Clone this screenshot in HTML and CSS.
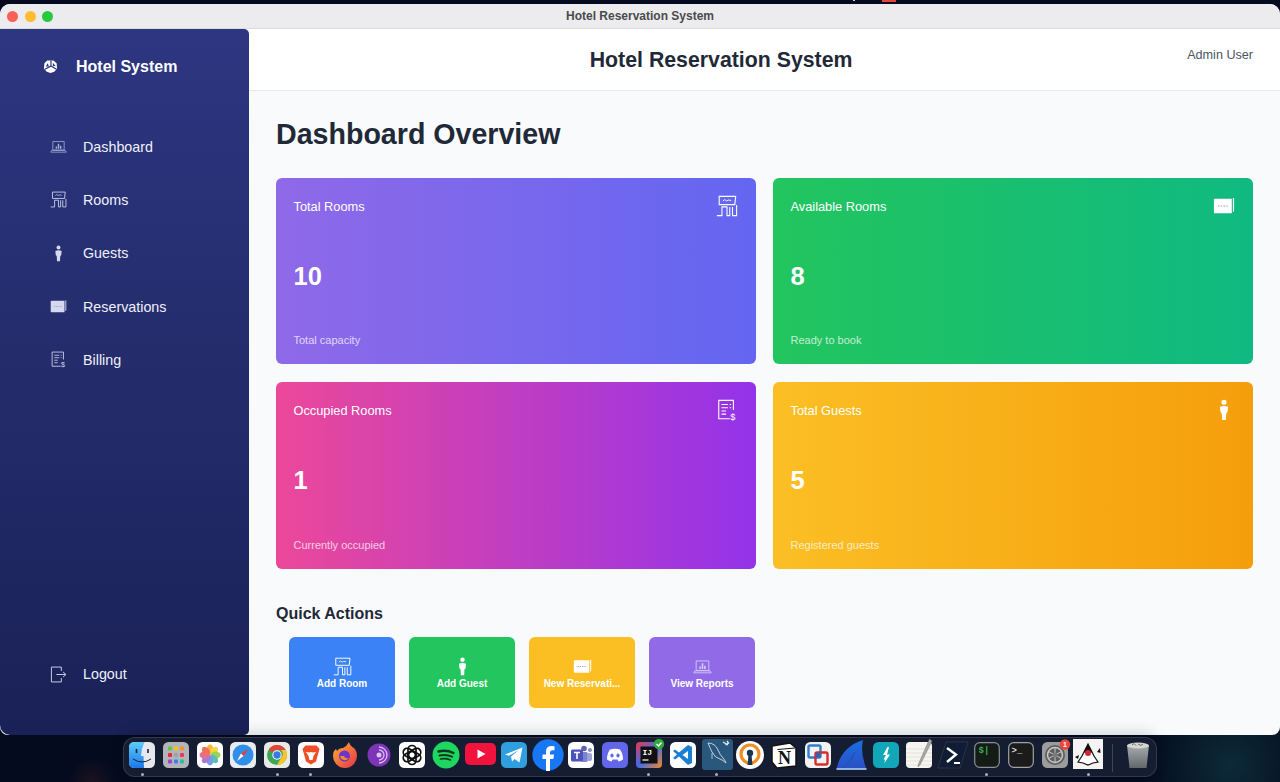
FILE: index.html
```html
<!DOCTYPE html>
<html lang="en">
<head>
    <meta charset="UTF-8">
    <meta name="viewport" content="width=device-width, initial-scale=1.0">
    <title>Hotel Reservation System</title>
    <link rel="stylesheet" href="styles.css">
</head>
<body>
    <svg class="defs" aria-hidden="true">
        <symbol id="i-report" viewBox="0 0 24 24">
            <path d="M4 5h16v12H4z M1 20h22l-1.500-2.500h-19z" fill="none" stroke="currentColor" stroke-width="1.100"/>
            <path d="M8 15v-3h2v3z M11 15V8h2v7z M14 15v-4h2v4z" fill="currentColor"/>
        </symbol>
        <symbol id="i-room" viewBox="0 0 24 24">
            <path d="M3.500 1.500h18l-1 9h-17z" fill="none" stroke="currentColor" stroke-width="1.200"/>
            <path d="M7.500 6.500l2-1.500 2 1.500 2-1 3 .5" fill="none" stroke="currentColor" stroke-width="1"/>
            <path d="M1 22.500h5.500V13h5.500v9.500h3V13 M22.500 11v11.500H18V13" fill="none" stroke="currentColor" stroke-width="1.200"/>
        </symbol>
        <symbol id="i-guest" viewBox="0 0 24 24">
            <circle cx="12" cy="3.500" r="2.800" fill="currentColor"/>
            <path d="M7.500 8.500q4.500-2 9 0l-.7 6-1.300 1-.4 7.500h-4.200l-.4-7.500-1.300-1z" fill="currentColor"/>
        </symbol>
        <symbol id="i-card" viewBox="0 0 24 24">
            <path d="M1 5q0-1 1-1h18.500v16H2q-1 0-1-1z" fill="currentColor"/>
            <path d="M21.700 3v15.500q1.500-.3 1.300-1.500V3.500z" fill="currentColor"/>
            <path d="M5.500 12h1.700M8.500 12h1.700M11.500 12h1.700M14.500 12h1.700" stroke="#8f93a8" stroke-width="1"/>
        </symbol>
        <symbol id="i-bill" viewBox="0 0 24 24">
            <path d="M19 12V1.500H3v20h12" fill="none" stroke="currentColor" stroke-width="1.200"/>
            <path d="M6 6h7M6 9.500h7M6 13h5M15 6h1.500M15 9.500h1.500M6 16.500h5" stroke="currentColor" stroke-width="1.100"/>
            <text x="15.500" y="23" class="dollar">$</text>
        </symbol>
        <symbol id="i-logout" viewBox="0 0 24 24">
            <path d="M16 7V1.500H2v21h14V17" fill="none" stroke="currentColor" stroke-width="1.300"/>
            <path d="M9 12h13M18.500 8.500L22.500 12l-4 3.500" fill="none" stroke="currentColor" stroke-width="1.300"/>
        </symbol>
    </svg>

    <div class="window">
        <div class="titlebar">
            <div class="lights">
                <span class="light red"></span>
                <span class="light yellow"></span>
                <span class="light green"></span>
            </div>
            <div class="titlebar-text">Hotel Reservation System</div>
        </div>

        <div class="app">
            <aside class="sidebar">
                <div class="brand">
                    <svg class="brand-icon" viewBox="0 0 16 16">
                        <path d="M4.500 1.500L11 1.500 14.500 4.500 15 10 12 13.500 8 15 4 13.500 1 10 1.500 4.500z" fill="#fff"/>
                        <path d="M8.500 1.500v6L2 11M8.500 7.500L14.500 11" fill="none" stroke="#2c357f" stroke-width="1.300"/>
                        <path d="M5 4.500l-2 3.500h3.500zM10.500 4v3.500h3z" fill="#2c357f"/>
                    </svg>
                    <span>Hotel System</span>
                </div>
                <nav class="nav">
                    <a class="nav-item"><svg class="nav-icon dim"><use href="#i-report"/></svg>Dashboard</a>
                    <a class="nav-item"><svg class="nav-icon"><use href="#i-room"/></svg>Rooms</a>
                    <a class="nav-item"><svg class="nav-icon"><use href="#i-guest"/></svg>Guests</a>
                    <a class="nav-item"><svg class="nav-icon"><use href="#i-card"/></svg>Reservations</a>
                    <a class="nav-item"><svg class="nav-icon"><use href="#i-bill"/></svg>Billing</a>
                </nav>
                <a class="nav-item logout"><svg class="nav-icon"><use href="#i-logout"/></svg>Logout</a>
            </aside>

            <main class="main">
                <header class="topbar">
                    <div class="topbar-title">Hotel Reservation System</div>
                    <div class="topbar-user">Admin User</div>
                </header>

                <section class="content">
                    <h1>Dashboard Overview</h1>

                    <div class="cards">
                        <div class="card purple">
                            <div class="card-top"><span>Total Rooms</span><svg class="card-icon"><use href="#i-room"/></svg></div>
                            <div class="card-value">10</div>
                            <div class="card-sub">Total capacity</div>
                        </div>
                        <div class="card emerald">
                            <div class="card-top"><span>Available Rooms</span><svg class="card-icon"><use href="#i-card"/></svg></div>
                            <div class="card-value">8</div>
                            <div class="card-sub">Ready to book</div>
                        </div>
                        <div class="card pink">
                            <div class="card-top"><span>Occupied Rooms</span><svg class="card-icon"><use href="#i-bill"/></svg></div>
                            <div class="card-value">1</div>
                            <div class="card-sub">Currently occupied</div>
                        </div>
                        <div class="card amber">
                            <div class="card-top"><span>Total Guests</span><svg class="card-icon"><use href="#i-guest"/></svg></div>
                            <div class="card-value">5</div>
                            <div class="card-sub">Registered guests</div>
                        </div>
                    </div>

                    <h2>Quick Actions</h2>
                    <div class="actions">
                        <a class="action blue"><svg class="action-icon"><use href="#i-room"/></svg>Add Room</a>
                        <a class="action green"><svg class="action-icon"><use href="#i-guest"/></svg>Add Guest</a>
                        <a class="action yellow"><svg class="action-icon"><use href="#i-card"/></svg>New Reservati...</a>
                        <a class="action violet"><svg class="action-icon dim"><use href="#i-report"/></svg>View Reports</a>
                    </div>
                </section>
            </main>
        </div>
    </div>

    <div class="dock">
        <!-- finder -->
        <div class="dock-item on"><svg viewBox="0 0 26 26">
            <defs><linearGradient id="fnd" x1="0" y1="0" x2="0" y2="1"><stop offset="0" stop-color="#5ecbf8"/><stop offset="1" stop-color="#1a78ea"/></linearGradient></defs>
            <rect width="26" height="26" rx="5.500" fill="#e6e8ee"/>
            <path d="M5.500 0h10q-3 6-3.500 14h2.500l.5 12H5.500Q0 26 0 20.500v-15Q0 0 5.500 0z" fill="url(#fnd)"/>
            <path d="M7.500 7v4M19 7v4" stroke="#123" stroke-width="1.600"/>
            <path d="M4 17q9 6 18 0" fill="none" stroke="#123" stroke-width="1"/>
        </svg></div>
        <!-- launchpad -->
        <div class="dock-item"><svg viewBox="0 0 26 26">
            <rect width="26" height="26" rx="5.500" fill="#b3b3b8"/>
            <g>
                <rect x="5" y="4.500" width="4" height="4" rx="1" fill="#58c84a"/><rect x="11" y="4.500" width="4" height="4" rx="1" fill="#f5c221"/><rect x="17" y="4.500" width="4" height="4" rx="1" fill="#f5932a"/>
                <rect x="5" y="11" width="4" height="4" rx="1" fill="#e8283a"/><rect x="11" y="11" width="4" height="4" rx="1" fill="#9fa3a8"/><rect x="17" y="11" width="4" height="4" rx="1" fill="#ea3a5c"/>
                <rect x="5" y="17.500" width="4" height="4" rx="1" fill="#a040d8"/><rect x="11" y="17.500" width="4" height="4" rx="1" fill="#2f83f0"/><rect x="17" y="17.500" width="4" height="4" rx="1" fill="#22c29a"/>
            </g>
        </svg></div>
        <!-- photos -->
        <div class="dock-item"><svg viewBox="0 0 26 26">
            <rect width="26" height="26" rx="5.500" fill="#fff"/>
            <g opacity=".85">
                <ellipse cx="13" cy="7.500" rx="3.400" ry="5" fill="#f7a823"/>
                <ellipse cx="13" cy="7.500" rx="3.400" ry="5" fill="#f4d21f" transform="rotate(45 13 13)"/>
                <ellipse cx="13" cy="7.500" rx="3.400" ry="5" fill="#8fcb3a" transform="rotate(90 13 13)"/>
                <ellipse cx="13" cy="7.500" rx="3.400" ry="5" fill="#3fb6a0" transform="rotate(135 13 13)"/>
                <ellipse cx="13" cy="7.500" rx="3.400" ry="5" fill="#5a8fe0" transform="rotate(180 13 13)"/>
                <ellipse cx="13" cy="7.500" rx="3.400" ry="5" fill="#9a62c8" transform="rotate(225 13 13)"/>
                <ellipse cx="13" cy="7.500" rx="3.400" ry="5" fill="#e0558a" transform="rotate(270 13 13)"/>
                <ellipse cx="13" cy="7.500" rx="3.400" ry="5" fill="#ee5a3a" transform="rotate(315 13 13)"/>
            </g>
        </svg></div>
        <!-- safari -->
        <div class="dock-item"><svg viewBox="0 0 26 26">
            <rect width="26" height="26" rx="5.500" fill="#e9ecef"/>
            <circle cx="13" cy="13" r="10.500" fill="#2f8fe8"/>
            <path d="M19 7l-8 4.500 2.500 2.500z" fill="#ee3b30"/>
            <path d="M7 19l4-7.500 2.500 2.500z" fill="#fff"/>
        </svg></div>
        <!-- chrome -->
        <div class="dock-item on"><svg viewBox="0 0 26 26">
            <rect width="26" height="26" rx="5.500" fill="#e9e9e6"/>
            <circle cx="13" cy="13" r="10" fill="#3aa757"/>
            <path d="M13 3a10 10 0 0 1 8.700 5H13a5 5 0 0 0-4.600 3L4.800 7.300A10 10 0 0 1 13 3z" fill="#e0463a"/>
            <path d="M21.700 8A10 10 0 0 1 13 23l4.300-7.500A5 5 0 0 0 17 8z" fill="#f7c430"/>
            <circle cx="13" cy="13" r="4.700" fill="#fff"/>
            <circle cx="13" cy="13" r="3.700" fill="#3b78e7"/>
        </svg></div>
        <!-- brave -->
        <div class="dock-item on"><svg viewBox="0 0 26 26">
            <rect width="26" height="26" rx="5.500" fill="#fff"/>
            <path d="M7.500 3.500h11l3 3.500-1 3.500-2.500 9-5 3-5-3-2.500-9-1-3.500z" fill="#ee4f28"/>
            <path d="M8 10l3.500.5L13 10l1.500.5L18 10l-2.500 4-1 4H11.500l-1-4z" fill="#fff"/>
        </svg></div>
        <!-- firefox -->
        <div class="dock-item"><svg viewBox="0 0 26 26">
            <defs><linearGradient id="ffx" x1="0" y1="0" x2="1" y2="1"><stop offset="0" stop-color="#ffb22e"/><stop offset="1" stop-color="#e8304c"/></linearGradient></defs>
            <path d="M17 0q1 4 5 6 3 3 3 8a12 12 0 1 1-24 0q0-5 3-7l1 2q2-3 6-3 4-2 6-6z" fill="url(#ffx)"/>
            <circle cx="12.500" cy="14" r="5.500" fill="#6a37c8"/>
            <path d="M8 14a5 5 0 0 0 9 2q-4 1-5-2z" fill="#f6872e"/>
        </svg></div>
        <!-- tor -->
        <div class="dock-item"><svg viewBox="0 0 26 26">
            <circle cx="13" cy="13" r="11.500" fill="#7d34b8"/>
            <path d="M13 5a8 8 0 0 1 0 16M13 8a5 5 0 0 1 0 10" fill="none" stroke="#dcc3f0" stroke-width="1.300"/>
            <circle cx="13" cy="13" r="2.500" fill="#dcc3f0"/>
        </svg></div>
        <!-- chatgpt -->
        <div class="dock-item"><svg viewBox="0 0 26 26">
            <rect width="26" height="26" rx="5.500" fill="#fff"/>
            <g fill="none" stroke="#111" stroke-width="1.700">
                <rect x="9" y="3.500" width="8" height="13" rx="4"/>
                <rect x="9" y="3.500" width="8" height="13" rx="4" transform="rotate(60 13 13)"/>
                <rect x="9" y="3.500" width="8" height="13" rx="4" transform="rotate(120 13 13)"/>
                <rect x="9" y="3.500" width="8" height="13" rx="4" transform="rotate(180 13 13)"/>
                <rect x="9" y="3.500" width="8" height="13" rx="4" transform="rotate(240 13 13)"/>
                <rect x="9" y="3.500" width="8" height="13" rx="4" transform="rotate(300 13 13)"/>
            </g>
        </svg></div>
        <!-- spotify -->
        <div class="dock-item"><svg viewBox="0 0 26 26">
            <circle cx="13" cy="13" r="13.500" fill="#1ed760"/>
            <g fill="none" stroke="#11361f" stroke-linecap="round">
                <path d="M5.500 9.500q8-2 15 1.500" stroke-width="2.400"/>
                <path d="M6.500 13.500q7-1.500 12.500 1.200" stroke-width="2"/>
                <path d="M7.500 17q5.500-1 10 1" stroke-width="1.600"/>
            </g>
        </svg></div>
        <!-- youtube -->
        <div class="dock-item"><svg viewBox="0 0 26 26">
            <rect x="-2" y="1" width="31" height="22" rx="5" fill="#f2133c"/>
            <path d="M10.500 7.500l8 4.500-8 4.500z" fill="#fff"/>
        </svg></div>
        <!-- telegram -->
        <div class="dock-item"><svg viewBox="0 0 26 26">
            <rect width="26" height="26" rx="5.500" fill="#2f9fe0"/>
            <path d="M4 12.500l17.500-7-3 15-5-3.500-2.500 2.500-1-5 8-6.500-10 5.800z" fill="#fff"/>
        </svg></div>
        <!-- facebook -->
        <div class="dock-item"><svg viewBox="0 0 26 26">
            <circle cx="13" cy="13" r="15.700" fill="#1877f2"/>
            <path d="M11 29V17H7.500v-4.500H11V9.500Q11 4 16.500 4q2 0 3 .3v4h-2q-2.500 0-2.500 2.200v2H19l-.6 4.500H15v12z" fill="#fff"/>
        </svg></div>
        <!-- teams -->
        <div class="dock-item"><svg viewBox="0 0 26 26">
            <rect width="26" height="26" rx="5.500" fill="#fff"/>
            <circle cx="16" cy="6.500" r="2.800" fill="#6264a7"/>
            <circle cx="22" cy="8" r="2" fill="#8b8cc7"/>
            <rect x="13" y="10" width="7" height="10" rx="2" fill="#7b83c9"/>
            <rect x="19" y="11" width="5" height="8" rx="2" fill="#9ea2dc"/>
            <rect x="3" y="7.500" width="12" height="12" rx="1.500" fill="#4b53bc"/>
            <path d="M6 10.500h6M9 10.500v6.500" stroke="#fff" stroke-width="1.600"/>
        </svg></div>
        <!-- discord -->
        <div class="dock-item"><svg viewBox="0 0 26 26">
            <rect width="26" height="26" rx="5.500" fill="#6166ea"/>
            <path d="M8 7.500q5-1.500 10 0 3 4 3 10-2 1.500-4.500 2l-1-2h-5l-1 2Q7 19 5 17.500q0-6 3-10z" fill="#fff"/>
            <ellipse cx="10" cy="13.500" rx="1.600" ry="2" fill="#6166ea"/>
            <ellipse cx="16" cy="13.500" rx="1.600" ry="2" fill="#6166ea"/>
        </svg></div>
        <!-- intellij -->
        <div class="dock-item on"><svg viewBox="0 0 26 26">
            <defs><linearGradient id="ij" x1="0" y1="0" x2="1" y2="1"><stop offset="0" stop-color="#f0383f"/><stop offset=".5" stop-color="#3f6bf0"/><stop offset="1" stop-color="#f78a20"/></linearGradient></defs>
            <rect width="26" height="26" rx="4" fill="url(#ij)"/>
            <rect x="4.500" y="4.500" width="17" height="17" fill="#111"/>
            <text x="6.500" y="13" class="dock-mono ij">IJ</text>
            <path d="M6.500 18h6" stroke="#fff" stroke-width="1.200"/>
            <circle cx="23" cy="2" r="5.200" fill="#2fa83c"/>
            <path d="M20.500 2l2 2 3-3.500" fill="none" stroke="#fff" stroke-width="1.400"/>
        </svg></div>
        <!-- vscode -->
        <div class="dock-item"><svg viewBox="0 0 26 26">
            <rect width="26" height="26" rx="5.500" fill="#fff"/>
            <path d="M18 3l4 2v16l-4 2-9-8.500-4 3-2-1.500 4-3.500-4-3.500 2-1.500 4 3zM18 9l-5.500 4 5.500 4z" fill="#1a7fd0"/>
        </svg></div>
        <!-- mysql workbench -->
        <div class="dock-item on"><svg viewBox="0 0 26 26">
            <rect x="-2" y="-3" width="31" height="31" rx="3" fill="#2a587c"/>
            <path d="M4 1q7 0 10 7 2 5 5 8 2 2 3 5-3-3-6-4-5-1-8-7Q6 6 4 1z" fill="none" stroke="#cfe0ea" stroke-width=".9"/>
            <path d="M8 11v6" stroke="#cfe0ea" stroke-width=".8"/>
            <path d="M19 0l5 3M23 -1l1.500 2-3 2" fill="none" stroke="#e4edf2" stroke-width="1.300"/>
        </svg></div>
        <!-- openvpn -->
        <div class="dock-item"><svg viewBox="0 0 26 26">
            <circle cx="13" cy="13" r="14" fill="#fff"/>
            <circle cx="13" cy="12" r="9" fill="none" stroke="#f08d23" stroke-width="3.200"/>
            <circle cx="13" cy="11" r="3.200" fill="#1c3450"/>
            <path d="M11.500 12.500h3l1 10.500h-5z" fill="#1c3450"/>
        </svg></div>
        <!-- notion -->
        <div class="dock-item"><svg viewBox="0 0 26 26">
            <path d="M1 4l18-3 6 5v18l-19 2-5-6z" fill="#fff" stroke="#111" stroke-width="1.500"/>
            <path d="M6.500 7.500L24 6" stroke="#111" stroke-width="1"/>
            <text x="7" y="22" class="notion">N</text>
        </svg></div>
        <!-- vmware fusion -->
        <div class="dock-item"><svg viewBox="0 0 26 26">
            <rect width="26" height="26" rx="5.500" fill="#f2f2f2"/>
            <rect x="3.500" y="3.500" width="12" height="12" rx="1.500" fill="none" stroke="#2f7fd0" stroke-width="2.400"/>
            <rect x="10.500" y="10.500" width="12" height="12" rx="1.500" fill="none" stroke="#d92c2c" stroke-width="2.400"/>
            <path d="M10.500 10.500h5v5h-5z" fill="#3b5ea8"/>
        </svg></div>
        <!-- wireshark -->
        <div class="dock-item"><svg viewBox="0 0 26 26">
            <defs><linearGradient id="wsh" x1="0" y1="0" x2="0" y2="1"><stop offset="0" stop-color="#1a6fe0"/><stop offset="1" stop-color="#2c4fc4"/></linearGradient></defs>
            <path d="M-2.500 27Q2 5 24 -2q-3 13 3.500 29z" fill="url(#wsh)"/>
            <path d="M4 26q8-6 12-16" fill="none" stroke="#1450b0" stroke-width="1"/>
            <path d="M-2.500 27h30" stroke="#9cc0ea" stroke-width="1.800"/>
        </svg></div>
        <!-- teal bolt -->
        <div class="dock-item"><svg viewBox="0 0 26 26">
            <rect width="26" height="26" rx="5.500" fill="#11a6b8"/>
            <path d="M14.500 5l-4.500 8h3l-2.500 4.500h1.500l-.5 3.500 5.500-8.500h-3l2-7.500z" fill="#fff"/>
        </svg></div>
        <!-- notepad -->
        <div class="dock-item"><svg viewBox="0 0 26 26">
            <rect width="26" height="26" rx="4" fill="#f7f5f0"/>
            <path d="M0 7h26M0 11h26M0 15h26M0 19h26M0 23h26" stroke="#d9d4ca" stroke-width=".6"/>
            <path d="M23.500 -3l2.500 2-12 24-2 2 .5-3z" fill="#a7a7a7" stroke="#777" stroke-width=".5"/>
        </svg></div>
        <!-- powershell -->
        <div class="dock-item"><svg viewBox="0 0 26 26">
            <path d="M6 0H28L20 26H-2z" fill="#0f1c33" stroke="#37455c" stroke-width=".6"/>
            <path d="M7 6l9 6.500-9 7.500" fill="none" stroke="#fff" stroke-width="2.400"/>
            <path d="M14 21h6" stroke="#fff" stroke-width="2"/>
        </svg></div>
        <!-- iterm -->
        <div class="dock-item on"><svg viewBox="0 0 26 26">
            <rect x=".7" y=".7" width="24.600" height="24.600" rx="5" fill="#141c18" stroke="#8a8f90" stroke-width="1.200"/>
            <text x="4.500" y="11" class="dock-mono term-green">$|</text>
        </svg></div>
        <!-- terminal -->
        <div class="dock-item"><svg viewBox="0 0 26 26">
            <rect x=".7" y=".7" width="24.600" height="24.600" rx="5" fill="#1b1b1b" stroke="#a2a2a2" stroke-width="1.200"/>
            <text x="3.500" y="11" class="dock-mono term-white">&gt;_</text>
        </svg></div>
        <!-- system preferences -->
        <div class="dock-item"><svg viewBox="0 0 26 26">
            <rect width="26" height="26" rx="5.500" fill="#9c9c9c"/>
            <circle cx="13" cy="13" r="10" fill="#5e5e5e"/>
            <circle cx="13" cy="13" r="7.500" fill="none" stroke="#c7c7c7" stroke-width="1.500"/>
            <path d="M13 5.500v15M6.500 9.500l13 7M19.500 9.500l-13 7" stroke="#c7c7c7" stroke-width="1"/>
            <circle cx="13" cy="13" r="2.500" fill="#7a7a7a"/>
            <circle cx="23" cy="2.500" r="5.200" fill="#f0453a"/>
            <text x="23" y="5" class="dock-badge">1</text>
        </svg></div>
        <!-- java -->
        <div class="dock-item on"><svg viewBox="0 0 26 26">
            <rect x="-2" y="-3" width="30" height="30" fill="#f6f4f3"/>
            <path d="M13 2l6 12 4 6-5 1-5 2-5-2-5-1 4-6z" fill="#fff" stroke="#111" stroke-width="1.200"/>
            <path d="M13 2l4.500 8.500h-9z" fill="#111"/>
            <circle cx="13" cy="11" r="3" fill="#d8232a"/>
            <path d="M4 13l-4 2 3 2zM22 10l3-4 .5 5z" fill="#111"/>
        </svg></div>

        <div class="dock-sep"></div>

        <!-- trash -->
        <div class="dock-item trash"><svg viewBox="0 0 26 26">
            <defs><linearGradient id="trs" x1="0" y1="0" x2="0" y2="1"><stop offset="0" stop-color="#a9adb0"/><stop offset="1" stop-color="#62676a"/></linearGradient></defs>
            <path d="M2 3h22l-2.500 23h-17z" fill="url(#trs)"/>
            <ellipse cx="13" cy="3.500" rx="11" ry="3" fill="#d6d6d0"/>
            <path d="M7 3l2-1.500 2 2M13 2l3 1.500 2-1.500" stroke="#6c6c68" stroke-width="1" fill="none"/>
        </svg></div>
    </div>
</body>
</html>
```

FILE: styles.css
```css
* {
    box-sizing: border-box;
}
html, body {
    height: 782px;
    overflow: hidden;
}
body {
    margin: 0;
    padding-top: 4px;
    font-family: "Liberation Sans", Arial, sans-serif;
    background:
        linear-gradient(#e8403a, #e8403a) 882px 0 / 14px 2px no-repeat,
        linear-gradient(#c9ced6, #c9ced6) 853px 0 / 2px 1px no-repeat,
        radial-gradient(circle at 1230px 765px, #0c2a38 0, transparent 90px),
        radial-gradient(circle at 92px 782px, #1c1220 0, transparent 24px),
        #040b1e;
}
.defs {
    display: none;
}
.dollar {
    font-family: "Liberation Sans", Arial, sans-serif;
    font-size: 10px;
    fill: currentColor;
}

/* window */
.window {
    height: 731px;
    display: flex;
    flex-direction: column;
    border-radius: 10px 10px 8px 8px;
    overflow: hidden;
    background: #f9fafb;
}
.titlebar {
    height: 25px;
    flex: none;
    display: flex;
    align-items: center;
    position: relative;
    background: #ececee;
    border-bottom: 1px solid #dcdcde;
}
.lights {
    display: flex;
    gap: 6.500px;
    margin-left: 7px;
    margin-top: 1px;
}
.light {
    width: 11px;
    height: 11px;
    border-radius: 50%;
}
.light.red { background: #fe5f57; }
.light.yellow { background: #febc2e; }
.light.green { background: #28c83f; }
.titlebar-text {
    position: absolute;
    left: 0;
    right: 0;
    top: 5px;
    text-align: center;
    font-size: 12px;
    font-weight: bold;
    color: #4a4a4c;
}
.app {
    flex: 1;
    display: flex;
    min-height: 0;
}

/* sidebar */
.sidebar {
    width: 249px;
    flex: none;
    display: flex;
    flex-direction: column;
    background: linear-gradient(180deg, #2d3680 0%, #1a2156 100%);
    border-radius: 0 5px 5px 10px;
    color: #fff;
    padding-bottom: 34px;
}
.brand {
    height: 75px;
    display: flex;
    align-items: center;
    gap: 18px;
    padding: 0 0 0 43px;
    font-size: 16px;
    font-weight: bold;
}
.brand-icon {
    width: 15px;
    height: 15px;
    flex: none;
}
.nav {
    margin-top: 16px;
    display: flex;
    flex-direction: column;
}
.nav-item {
    height: 53.300px;
    display: flex;
    align-items: center;
    gap: 16px;
    padding-left: 50px;
    font-size: 14.300px;
    color: #eef0fa;
}
.nav-icon {
    width: 17px;
    height: 17px;
    flex: none;
    color: #d5d8ee;
}
.nav-icon.dim {
    color: #aab0d8;
}
.logout {
    margin-top: auto;
}

/* main */
.main {
    flex: 1;
    min-width: 0;
    display: flex;
    flex-direction: column;
}
.topbar {
    height: 62px;
    flex: none;
    display: flex;
    align-items: center;
    gap: 21px;
    padding: 0 27px;
    background: #fff;
    border-bottom: 1px solid #e8eaee;
}
.topbar-title {
    flex: 1;
    margin-top: 1px;
    text-align: center;
    font-size: 21.300px;
    font-weight: bold;
    color: #1f2937;
}
.topbar-user {
    font-size: 12.600px;
    color: #4b5563;
    margin-bottom: 10px;
}
.content {
    flex: 1;
    padding: 27px 27px 0;
}
h1 {
    margin: 0 0 27px;
    font-size: 28.600px;
    line-height: 33px;
    color: #1f2937;
}
.cards {
    display: grid;
    grid-template-columns: 1fr 1fr;
    grid-template-rows: 186px 187px;
    gap: 18px 17px;
}
.card {
    display: flex;
    flex-direction: column;
    justify-content: space-between;
    padding: 17px 18px 17px 17.500px;
    border-radius: 6px;
    color: #fff;
}
.card.purple { background: linear-gradient(90deg, #8f69e8, #6366f1); }
.card.emerald { background: linear-gradient(90deg, #22c55e, #10b981); }
.card.pink { background: linear-gradient(90deg, #ec4899, #9333ea); }
.card.amber { background: linear-gradient(90deg, #fbbf24, #f59e0b); }
.card-top {
    display: flex;
    justify-content: space-between;
    align-items: center;
    height: 22px;
    font-size: 12.800px;
}
.card-icon {
    width: 22px;
    height: 22px;
    color: #fff;
}
.card-value {
    font-size: 25.500px;
    font-weight: bold;
    line-height: 30px;
}
.card-sub {
    font-size: 11px;
    line-height: 13px;
    opacity: .72;
}
h2 {
    margin: 36px 0 14px;
    font-size: 16px;
    line-height: 18px;
    color: #1f2937;
}
.actions {
    display: flex;
    gap: 14px;
    margin-left: 13px;
}
.action {
    width: 106px;
    height: 71px;
    display: flex;
    flex-direction: column;
    align-items: center;
    justify-content: center;
    gap: 2px;
    padding-top: 1px;
    border-radius: 6px;
    color: #fff;
    font-size: 10px;
    font-weight: bold;
    white-space: nowrap;
}
.action.blue { background: #3b82f6; }
.action.green { background: #22c55e; }
.action.yellow { background: #fbbf24; }
.action.violet { background: #916ae8; }
.action-icon {
    width: 19px;
    height: 19px;
    color: #fff;
}
.action-icon.dim {
    color: #d9cff7;
}

/* dock */
.dock {
    position: relative;
    width: 1034px;
    height: 40px;
    margin: 2px auto 0;
    padding: 4px 5px 0;
    display: flex;
    gap: 7.800px;
    background: rgba(24, 32, 54, .88);
    border: 1px solid rgba(255, 255, 255, .13);
    border-radius: 12px;
    box-shadow: 0 -4px 14px rgba(0, 0, 0, .16);
}
.dock-item {
    width: 26px;
    flex: none;
    display: flex;
    flex-direction: column;
    align-items: center;
    gap: 5px;
}
.dock-item svg {
    width: 26px;
    height: 26px;
    overflow: visible;
    display: block;
}
.dock-item::after {
    content: "";
    width: 3px;
    height: 3px;
    border-radius: 50%;
}
.dock-item.on::after {
    background: #a9b0ba;
}
.dock-sep {
    width: 1px;
    height: 28px;
    margin: 2px 4px 0 3px;
    background: rgba(255, 255, 255, .18);
}
.dock-mono {
    font-family: "Liberation Mono", monospace;
    font-weight: bold;
}
.ij {
    font-size: 8px;
    fill: #fff;
}
.term-green {
    font-size: 9px;
    fill: #3fae4a;
}
.term-white {
    font-size: 9px;
    fill: #d8d8d8;
}
.notion {
    font-family: "Liberation Serif", serif;
    font-size: 18px;
    font-weight: bold;
    fill: #111;
}
.dock-badge {
    font-family: "Liberation Sans", Arial, sans-serif;
    font-size: 7px;
    font-weight: bold;
    fill: #fff;
    text-anchor: middle;
}
```
